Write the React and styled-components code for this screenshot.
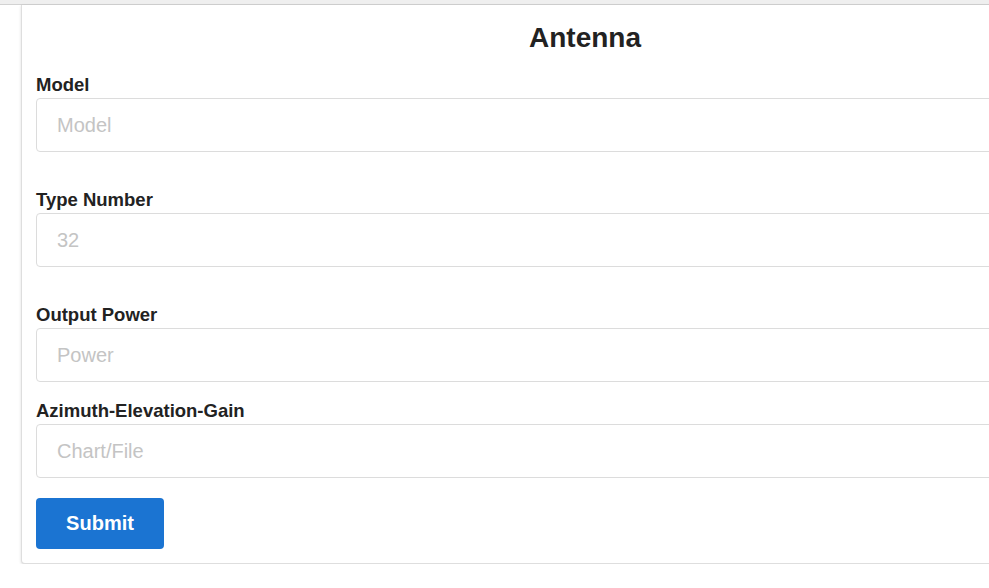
import React from 'react'
import styled, { createGlobalStyle } from 'styled-components'

const GlobalStyle = createGlobalStyle`
    html, body {
        margin: 0;
        padding: 0;
        background: #fff;
        overflow: hidden;
        font-family: "Liberation Sans", Arial, sans-serif;
    }
`

const TopStrip = styled.div`
    height: 4px;
    background: #efefef;
    border-bottom: 1px solid #d2d2d2;
`

const Page = styled.div`
    padding-left: 21px;
`

const Card = styled.form`
    box-sizing: border-box;
    width: 1128px;
    padding: 15px 14px 14px;
    border: 1px solid #dedede;
    border-top: none;
    border-radius: 0 0 4px 4px;
    background: #fff;
    box-shadow: 0 1px 3px rgba(0, 0, 0, 0.14);
    display: flex;
    flex-direction: column;
`

const Title = styled.h2`
    margin: 0 0 18px;
    font-size: 28px;
    line-height: 36px;
    font-weight: 700;
    text-align: center;
    color: #222;
`

const Field = styled.div`
    display: flex;
    flex-direction: column;
    margin-bottom: ${props => props.gap}px;
`

const Label = styled.label`
    font-size: 18.5px;
    line-height: 22px;
    font-weight: 700;
    color: #222;
    margin-bottom: 2px;
`

const Input = styled.input`
    box-sizing: border-box;
    height: 54px;
    padding: 0 20px;
    border: 1px solid #dcdcdc;
    border-radius: 4px;
    font-family: inherit;
    font-size: 20px;
    color: #333;
    outline: none;

    &::placeholder {
        color: #c4c4c4;
    }
`

const SubmitButton = styled.button`
    align-self: flex-start;
    height: 51px;
    width: 128px;
    border: none;
    border-radius: 4px;
    background: #1b74d2;
    color: #fff;
    font-family: inherit;
    font-size: 20px;
    font-weight: 700;
    cursor: pointer;
`

const fields = [
    { label: 'Model', placeholder: 'Model', gap: 37 },
    { label: 'Type Number', placeholder: '32', gap: 37 },
    { label: 'Output Power', placeholder: 'Power', gap: 18 },
    { label: 'Azimuth-Elevation-Gain', placeholder: 'Chart/File', gap: 20 },
]

export default function App() {
    return (
        <>
            <GlobalStyle />
            <TopStrip />
            <Page>
                <Card onSubmit={e => e.preventDefault()}>
                    <Title>Antenna</Title>
                    {fields.map(f =>
                        <Field key={f.label} gap={f.gap}>
                            <Label>{f.label}</Label>
                            <Input placeholder={f.placeholder} />
                        </Field>
                    )}
                    <SubmitButton type="submit">Submit</SubmitButton>
                </Card>
            </Page>
        </>
    )
}
